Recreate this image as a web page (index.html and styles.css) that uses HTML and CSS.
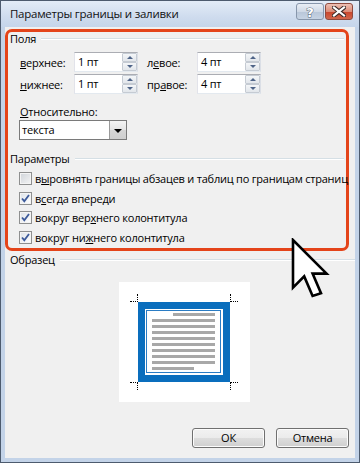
FILE: index.html
```html
<!DOCTYPE html>
<html lang="ru">
<head>
<meta charset="utf-8">
<title>Параметры границы и заливки</title>
<link rel="stylesheet" href="styles.css">
</head>
<body>
<div class="window">
  <div class="titlebar">
    <span class="title">Параметры границы и заливки</span>
    <div class="caption-btns">
      <div class="cbtn help">
        <svg width="14" height="13" viewBox="0 0 14 13"><text x="7" y="11.5" text-anchor="middle" class="qmark">?</text></svg>
      </div>
      <div class="cbtn close">
        <svg width="14" height="11" viewBox="0 0 14 11"><path d="M2 1.5 L12 9.5 M12 1.5 L2 9.5" stroke="#3a2a28" stroke-width="4.2" stroke-linecap="square"/><path d="M2 1.5 L12 9.5 M12 1.5 L2 9.5" stroke="#ffffff" stroke-width="2.2" stroke-linecap="square"/></svg>
      </div>
    </div>
  </div>
  <div class="client">
    <div class="highlight">
      <div class="group-head"><span>Поля</span><i class="gline"></i></div>
      <div class="fields">
        <span class="lbl"><u>в</u>ерхнее:</span>
        <div class="spin"><span class="val">1 пт</span><span class="arrows"><b class="up"></b><b class="down"></b></span></div>
        <span class="lbl">л<u>е</u>вое:</span>
        <div class="spin"><span class="val">4 пт</span><span class="arrows"><b class="up"></b><b class="down"></b></span></div>
        <span class="lbl"><u>н</u>ижнее:</span>
        <div class="spin"><span class="val">1 пт</span><span class="arrows"><b class="up"></b><b class="down"></b></span></div>
        <span class="lbl">пр<u>а</u>вое:</span>
        <div class="spin"><span class="val">4 пт</span><span class="arrows"><b class="up"></b><b class="down"></b></span></div>
      </div>
      <div class="rel-label"><u>О</u>тносительно:</div>
      <div class="select"><span class="val">текста</span><span class="drop"><i class="tri"></i></span></div>
      <div class="group-head params"><span>Параметры</span><i class="gline"></i></div>
      <div class="checks">
        <div class="chk"><span class="box"></span><span>в<u>ы</u>ровнять границы абзацев и таблиц по границам страниц</span></div>
        <div class="chk"><span class="box on"><svg width="9" height="9" viewBox="0 0 9 9"><path d="M1 4.5 L3.3 7.2 L8 1" fill="none" stroke="#3d5a9a" stroke-width="1.8"/></svg></span><span>в<u>с</u>егда впереди</span></div>
        <div class="chk"><span class="box on"><svg width="9" height="9" viewBox="0 0 9 9"><path d="M1 4.5 L3.3 7.2 L8 1" fill="none" stroke="#3d5a9a" stroke-width="1.8"/></svg></span><span>вокруг вер<u>х</u>него колонтитула</span></div>
        <div class="chk"><span class="box on"><svg width="9" height="9" viewBox="0 0 9 9"><path d="M1 4.5 L3.3 7.2 L8 1" fill="none" stroke="#3d5a9a" stroke-width="1.8"/></svg></span><span>вокруг ни<u>ж</u>него колонтитула</span></div>
      </div>
    </div>
    <div class="group-head sample"><span>Образец</span><i class="gline"></i></div>
    <div class="preview">
      <div class="page">
        <div class="page-inner">
          <i class="tl short-r"></i><i class="tl"></i><i class="tl"></i><i class="tl"></i><i class="tl"></i><i class="tl"></i><i class="tl"></i><i class="tl"></i><i class="tl"></i><i class="tl short-l"></i>
        </div>
      </div>
      <i class="mark m-tl"></i><i class="mark m-tr"></i><i class="mark m-bl"></i><i class="mark m-br"></i>
    </div>
    <div class="buttons">
      <div class="btn">ОК</div>
      <div class="btn">Отмена</div>
    </div>
  </div>
  <svg class="cursor" width="40" height="62" viewBox="0 0 40 62"><path d="M2 2 L2 49.6 L13.2 38.4 L21.6 58 L30 55.2 L21.6 35.6 L35.6 35.6 Z" fill="#ffffff" stroke="#000000" stroke-width="2.6" stroke-linejoin="miter"/></svg>
</div>
</body>
</html>
```
FILE: styles.css
```css
* { box-sizing: border-box; }
html, body { margin: 0; padding: 0; }
body {
  width: 360px;
  height: 463px;
  overflow: hidden;
  font-family: "Open Sans", "Noto Sans", "Liberation Sans", sans-serif;
  font-size: 11px;
  letter-spacing: -0.22px;
  color: #000;
  background: #ffffff;
}
u { text-decoration: underline; text-underline-offset: 1px; }

.window {
  position: relative;
  width: 360px;
  height: 463px;
  border: 1px solid #4d5b6e;
  background: #c3d3e8;
  display: flex;
  flex-direction: column;
}

.titlebar {
  height: 26px;
  flex: none;
  display: flex;
  justify-content: space-between;
  background: linear-gradient(#e3ecf7, #cfdcee 60%, #c5d5ea);
  padding-left: 9px;
}
.title {
  line-height: 26px;
  font-size: 11.5px;
  letter-spacing: -0.25px;
  color: #111;
}
.caption-btns {
  display: flex;
  gap: 1px;
  margin-top: 2px;
  margin-right: 6px;
  align-self: flex-start;
}
.cbtn {
  width: 28px;
  height: 17px;
  border-radius: 3px;
  display: flex;
  align-items: center;
  justify-content: center;
}
.help {
  border: 1px solid #8796ab;
  background: linear-gradient(#e9eef5, #cfd9e6 50%, #b8c6d8 51%, #c6d3e3);
}
.qmark {
  font-family: "DejaVu Sans", sans-serif;
  font-size: 13px;
  font-weight: bold;
  fill: #ffffff;
  stroke: #5a6679;
  stroke-width: 1px;
  paint-order: stroke;
}
.close {
  border: 1px solid #8e4a3e;
  background: linear-gradient(#eec0b4, #dc8d78 50%, #c9452b 51%, #d1664c);
}

.client {
  flex: 1;
  margin: 0 4px 4px 4px;
  background: #f0f0f0;
  display: flex;
  flex-direction: column;
}

.highlight {
  margin-top: 2px;
  width: 344px;
  height: 222px;
  border: 3px solid #e4441a;
  border-radius: 7px;
  padding: 0 0 0 2px;
}

.group-head {
  display: flex;
  align-items: center;
  gap: 5px;
  line-height: 13px;
  height: 13px;
  padding-right: 2px;
}
.gline {
  flex: 1;
  height: 2px;
  border-top: 1px solid #d5dfe5;
  border-bottom: 1px solid #ffffff;
  margin-top: 1px;
}

.fields {
  margin-top: 7px;
  margin-left: 10px;
  display: grid;
  grid-template-columns: 54px 73px 50px 64px;
  grid-auto-rows: 20px;
  row-gap: 2px;
  align-items: center;
}
.spin {
  width: 64px;
  height: 20px;
  display: flex;
  background: #fff;
  border: 1px solid #abadb3;
  border-color: #abadb3 #dbdfe6 #e3e9ef #e2e3ea;
}
.spin .val {
  flex: 1;
  padding-left: 3px;
  line-height: 18px;
}
.arrows {
  width: 15px;
  display: flex;
  flex-direction: column;
}
.arrows b {
  flex: 1;
  position: relative;
  border: 1px solid #c5cbd3;
  background: linear-gradient(#f4f6f8, #e2e6eb);
  border-radius: 1px;
}
.arrows b::after {
  content: "";
  position: absolute;
  left: 4px;
  top: 2px;
  border-left: 3px solid transparent;
  border-right: 3px solid transparent;
}
.arrows .up::after { border-bottom: 3px solid #4f6488; }
.arrows .down::after { border-top: 3px solid #4f6488; }

.rel-label {
  margin-top: 11px;
  margin-left: 10px;
  line-height: 13px;
}
.select {
  margin-top: 2px;
  margin-left: 9px;
  width: 108px;
  height: 20px;
  background: #fff;
  border: 1px solid #7a7a7a;
  display: flex;
}
.select .val {
  flex: 1;
  padding-left: 2px;
  line-height: 18px;
}
.drop {
  width: 17px;
  border-left: 1px solid #9a9a9a;
  background: linear-gradient(#f4f4f4, #e4e4e4 50%, #d6d6d6 51%, #cfcfcf);
  display: flex;
  align-items: center;
  justify-content: center;
}
.tri {
  border-left: 4px solid transparent;
  border-right: 4px solid transparent;
  border-top: 4px solid #000;
  margin-top: 1px;
}

.group-head.params { margin-top: 12px; }

.checks {
  margin-top: 4px;
  margin-left: 9px;
}
.chk {
  height: 19.5px;
  display: flex;
  align-items: center;
  gap: 3px;
  white-space: nowrap;
}
.box {
  width: 13px;
  height: 13px;
  flex: none;
  border: 1px solid #8e8f8f;
  background: linear-gradient(135deg, #cfd3d9, #f4f4f4);
  box-shadow: inset 0 0 0 1px #f4f4f4;
  display: flex;
  align-items: center;
  justify-content: center;
}
.box.on {
  background: linear-gradient(135deg, #dde2e8, #ffffff);
}

.group-head.sample {
  margin-top: 2px;
  padding-left: 5px;
  padding-right: 0;
}

.preview {
  position: relative;
  margin-top: 16px;
  margin-left: 114px;
  width: 131px;
  height: 120px;
  background: #ffffff;
  padding: 20px 0 0 19px;
}
.page {
  width: 92px;
  height: 80px;
  border: 7px solid #0a6ebd;
  padding: 1px 2px 2px 1px;
  background: #fff;
}
.page-inner {
  height: 100%;
  border: 1px solid #2a7cc4;
  padding: 2px 0 0 5px;
  display: flex;
  flex-direction: column;
  gap: 3px;
}
.tl {
  width: 63px;
  height: 3px;
  background: #a8a8a8;
  flex: none;
}
.tl.short-r { width: 42px; margin-left: 21px; }
.tl.short-l { width: 42px; }

.mark {
  position: absolute;
  width: 8px;
  height: 8px;
}
.m-tl { left: 11px; top: 12px; border-right: 1px dotted #000; border-bottom: 1px dotted #000; }
.m-tr { left: 111px; top: 12px; border-left: 1px dotted #000; border-bottom: 1px dotted #000; }
.m-bl { left: 11px; top: 100px; border-right: 1px dotted #000; border-top: 1px dotted #000; }
.m-br { left: 111px; top: 100px; border-left: 1px dotted #000; border-top: 1px dotted #000; }

.buttons {
  margin-top: 26px;
  margin-right: 6px;
  display: flex;
  justify-content: flex-end;
  gap: 11px;
}
.btn {
  width: 73px;
  height: 20px;
  border: 1px solid #707070;
  border-radius: 3px;
  background: linear-gradient(#f2f2f2, #ebebeb 50%, #dddddd 51%, #cfcfcf);
  box-shadow: inset 0 0 0 1px #fcfcfc;
  text-align: center;
  line-height: 18px;
}

.cursor {
  position: absolute;
  left: 290px;
  top: 237px;
}
```
